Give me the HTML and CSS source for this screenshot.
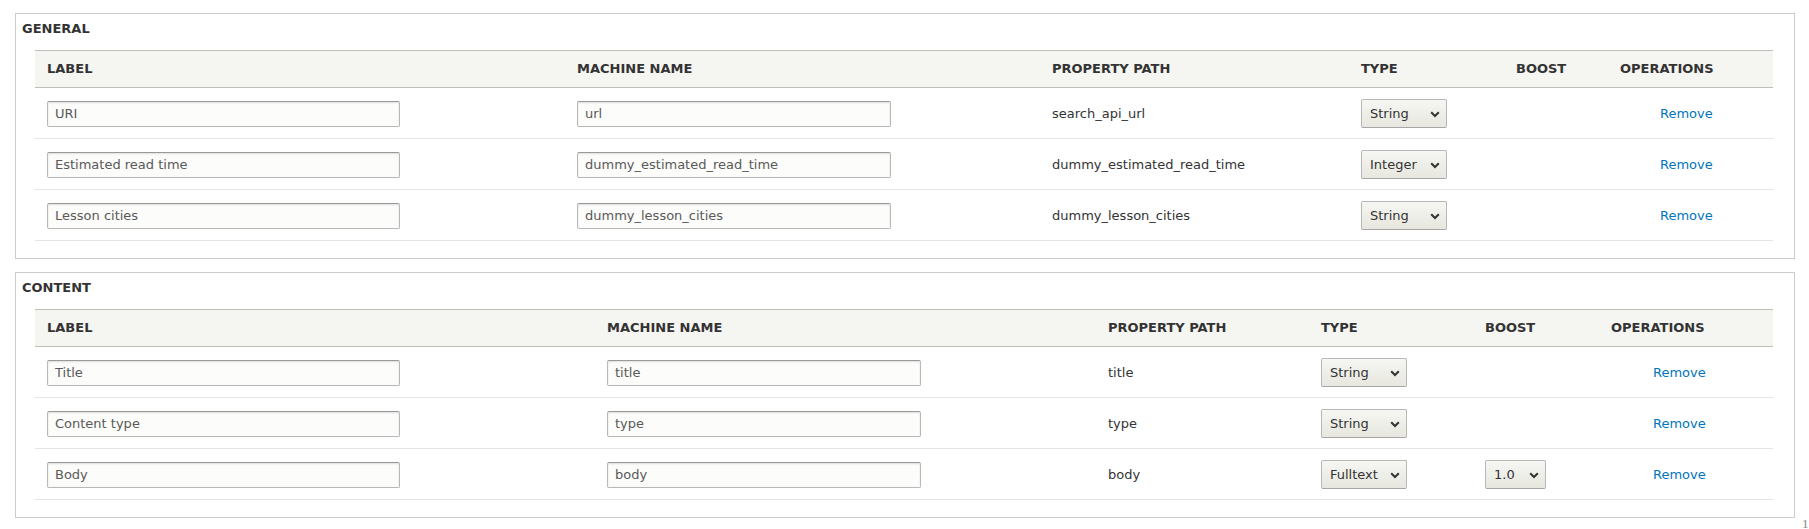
FILE: index.html
```html
<!DOCTYPE html>
<html lang="en">
<head>
<meta charset="utf-8">
<title>Fields</title>
<link rel="stylesheet" href="styles.css">
</head>
<body>
<div class="page">
  <section class="fieldset">
    <div class="legend">General</div>
    <div class="table-wrap">
      <table class="fields general">
        <colgroup>
          <col class="c1"><col class="c2"><col class="c3"><col class="c4"><col class="c5"><col class="c6">
        </colgroup>
        <thead>
          <tr><th>Label</th><th>Machine name</th><th>Property path</th><th>Type</th><th>Boost</th><th>Operations</th></tr>
        </thead>
        <tbody>
          <tr>
            <td><input class="text label-input" type="text" value="URI"></td>
            <td><input class="text machine-input" type="text" value="url"></td>
            <td>search_api_url</td>
            <td><span class="select-wrap type-select"><select><option>String</option></select><svg class="caret" width="10" height="7" viewBox="0 0 10 7"><polyline points="1.2,1.2 5,5 8.8,1.2" fill="none" stroke="#333" stroke-width="2"/></svg></span></td>
            <td></td>
            <td class="op"><a href="#">Remove</a></td>
          </tr>
          <tr>
            <td><input class="text label-input" type="text" value="Estimated read time"></td>
            <td><input class="text machine-input" type="text" value="dummy_estimated_read_time"></td>
            <td>dummy_estimated_read_time</td>
            <td><span class="select-wrap type-select"><select><option>Integer</option></select><svg class="caret" width="10" height="7" viewBox="0 0 10 7"><polyline points="1.2,1.2 5,5 8.8,1.2" fill="none" stroke="#333" stroke-width="2"/></svg></span></td>
            <td></td>
            <td class="op"><a href="#">Remove</a></td>
          </tr>
          <tr>
            <td><input class="text label-input" type="text" value="Lesson cities"></td>
            <td><input class="text machine-input" type="text" value="dummy_lesson_cities"></td>
            <td>dummy_lesson_cities</td>
            <td><span class="select-wrap type-select"><select><option>String</option></select><svg class="caret" width="10" height="7" viewBox="0 0 10 7"><polyline points="1.2,1.2 5,5 8.8,1.2" fill="none" stroke="#333" stroke-width="2"/></svg></span></td>
            <td></td>
            <td class="op"><a href="#">Remove</a></td>
          </tr>
        </tbody>
      </table>
    </div>
  </section>

  <section class="fieldset">
    <div class="legend">Content</div>
    <div class="table-wrap">
      <table class="fields content">
        <colgroup>
          <col class="c1"><col class="c2"><col class="c3"><col class="c4"><col class="c5"><col class="c6">
        </colgroup>
        <thead>
          <tr><th>Label</th><th>Machine name</th><th>Property path</th><th>Type</th><th>Boost</th><th>Operations</th></tr>
        </thead>
        <tbody>
          <tr>
            <td><input class="text label-input" type="text" value="Title"></td>
            <td><input class="text machine-input" type="text" value="title"></td>
            <td>title</td>
            <td><span class="select-wrap type-select"><select><option>String</option></select><svg class="caret" width="10" height="7" viewBox="0 0 10 7"><polyline points="1.2,1.2 5,5 8.8,1.2" fill="none" stroke="#333" stroke-width="2"/></svg></span></td>
            <td></td>
            <td class="op"><a href="#">Remove</a></td>
          </tr>
          <tr>
            <td><input class="text label-input" type="text" value="Content type"></td>
            <td><input class="text machine-input" type="text" value="type"></td>
            <td>type</td>
            <td><span class="select-wrap type-select"><select><option>String</option></select><svg class="caret" width="10" height="7" viewBox="0 0 10 7"><polyline points="1.2,1.2 5,5 8.8,1.2" fill="none" stroke="#333" stroke-width="2"/></svg></span></td>
            <td></td>
            <td class="op"><a href="#">Remove</a></td>
          </tr>
          <tr>
            <td><input class="text label-input" type="text" value="Body"></td>
            <td><input class="text machine-input" type="text" value="body"></td>
            <td>body</td>
            <td><span class="select-wrap type-select"><select><option>Fulltext</option></select><svg class="caret" width="10" height="7" viewBox="0 0 10 7"><polyline points="1.2,1.2 5,5 8.8,1.2" fill="none" stroke="#333" stroke-width="2"/></svg></span></td>
            <td><span class="select-wrap boost-select"><select><option>1.0</option></select><svg class="caret" width="10" height="7" viewBox="0 0 10 7"><polyline points="1.2,1.2 5,5 8.8,1.2" fill="none" stroke="#333" stroke-width="2"/></svg></span></td>
            <td class="op"><a href="#">Remove</a></td>
          </tr>
        </tbody>
      </table>
    </div>
  </section>
</div>
<span class="corner-mark">1</span>
</body>
</html>
```

FILE: styles.css
```css
* { box-sizing: border-box; }

html, body {
  margin: 0;
  background: #fff;
}

body {
  font-family: "DejaVu Sans", "Liberation Sans", sans-serif;
  font-size: 13px;
  color: #333;
  position: relative;
  min-height: 529px;
  overflow: hidden;
}

.page {
  padding: 13px 14px 0 15px;
}

.fieldset {
  border: 1px solid #ccc;
  padding: 0 21px 17px 6px;
}

.fieldset + .fieldset {
  margin-top: 13px;
}

.legend {
  padding-top: 7px;
  line-height: 16px;
  margin-bottom: 13px;
  font-weight: bold;
  text-transform: uppercase;
  color: #333;
}

.table-wrap {
  padding-left: 13px;
}

.fields {
  width: 100%;
  border-collapse: collapse;
  table-layout: fixed;
}

.general .c1 { width: 530px; }
.general .c2 { width: 475px; }
.general .c3 { width: 309px; }
.general .c4 { width: 155px; }
.general .c5 { width: 104px; }
.general .c6 { width: 165px; }

.content .c1 { width: 560px; }
.content .c2 { width: 501px; }
.content .c3 { width: 213px; }
.content .c4 { width: 164px; }
.content .c5 { width: 126px; }
.content .c6 { width: 174px; }

.fields th {
  background: #f5f5f2;
  border-top: 1px solid #bfbfba;
  border-bottom: 1px solid #bfbfba;
  padding: 10px 12px;
  line-height: 16px;
  text-align: left;
  font-weight: bold;
  text-transform: uppercase;
  color: #333;
  white-space: nowrap;
}

.fields td {
  border-bottom: 1px solid #e6e4df;
  padding: 11px 12px 10px;
  line-height: 16px;
  vertical-align: middle;
  color: #333;
  white-space: nowrap;
}

.fields td.op {
  padding-left: 52px;
}

.content td.op {
  padding-left: 54px;
}

.text {
  display: block;
  height: 26px;
  padding: 4px 7px;
  font-family: inherit;
  font-size: 13px;
  line-height: 16px;
  color: #595959;
  background: #fcfcfa;
  border: 1px solid #b8b8b8;
  border-top-color: #999;
  border-radius: 2px;
  box-shadow: inset 0 1px 2px rgba(0, 0, 0, 0.12);
  outline: none;
}

.label-input { width: 353px; }
.machine-input { width: 314px; }

.select-wrap {
  position: relative;
  display: block;
  height: 29px;
}

.type-select { width: 86px; }
.boost-select { width: 61px; }

.select-wrap select {
  -webkit-appearance: none;
  appearance: none;
  display: block;
  width: 100%;
  height: 29px;
  margin: 0;
  padding: 0 22px 0 8px;
  font-family: inherit;
  font-size: 13px;
  line-height: 27px;
  color: #333;
  background: linear-gradient(to bottom, #f6f6f3, #e7e7df);
  border: 1px solid #b8b8b8;
  border-bottom-color: #a6a6a6;
  border-radius: 2px;
  outline: none;
}

.caret {
  position: absolute;
  right: 7px;
  top: 12px;
  pointer-events: none;
}

a {
  color: #0074bd;
  text-decoration: none;
}

.corner-mark {
  position: absolute;
  left: 1802px;
  top: 516px;
  font-family: "Liberation Serif", serif;
  font-size: 13px;
  line-height: 16px;
  color: #888;
}
```
